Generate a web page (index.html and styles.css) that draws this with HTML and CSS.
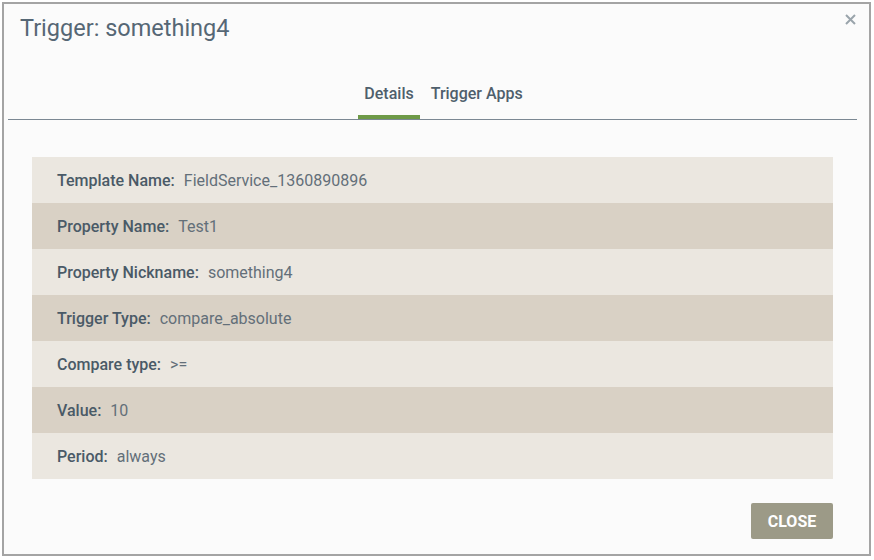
FILE: index.html
```html
<!DOCTYPE html>
<html>
<head>
<meta charset="utf-8">
<link rel="stylesheet" href="styles.css">
</head>
<body>
<div class="modal">
  <div class="header">
    <h1 class="title">Trigger: something4</h1>
    <button class="close-x" aria-label="Close">
      <svg width="11" height="11" viewBox="0 0 11 11"><path d="M1 1L10 10M10 1L1 10" stroke="#9aa4ab" stroke-width="2" stroke-linecap="butt"/></svg>
    </button>
  </div>
  <div class="tabs">
    <div class="tab active">Details</div>
    <div class="tab">Trigger Apps</div>
  </div>
  <div class="table">
    <div class="row"><span class="label">Template Name:</span><span class="value">FieldService_1360890896</span></div>
    <div class="row"><span class="label">Property Name:</span><span class="value">Test1</span></div>
    <div class="row"><span class="label">Property Nickname:</span><span class="value">something4</span></div>
    <div class="row"><span class="label">Trigger Type:</span><span class="value">compare_absolute</span></div>
    <div class="row"><span class="label">Compare type:</span><span class="value">&gt;=</span></div>
    <div class="row"><span class="label">Value:</span><span class="value">10</span></div>
    <div class="row"><span class="label">Period:</span><span class="value">always</span></div>
  </div>
  <div class="footer">
    <button class="btn-close">CLOSE</button>
  </div>
</div>
</body>
</html>
```
FILE: styles.css
```css
html, body {
  margin: 0;
  padding: 0;
  background: #ffffff;
}

.modal {
  box-sizing: border-box;
  margin: 2px 0 0 2px;
  width: 869px;
  height: 554px;
  border: 2px solid #a4a4a4;
  background: #fbfbfb;
  display: flex;
  flex-direction: column;
  font-family: Roboto, "Liberation Sans", sans-serif;
}

.header {
  display: flex;
  justify-content: space-between;
  align-items: flex-start;
  padding: 11px 13px 0 16px;
}

.title {
  margin: 0;
  font-size: 23.5px;
  line-height: 26px;
  font-weight: 400;
  color: #566775;
}

.close-x {
  margin-top: -1px;
  padding: 0;
  border: none;
  background: none;
  width: 11px;
  height: 11px;
  display: flex;
}

.tabs {
  display: flex;
  justify-content: center;
  gap: 5px;
  margin: 43px 12px 0 4px;
  padding-left: 22px;
  border-bottom: 1px solid #7b8893;
}

.tab {
  padding: 0 6px 11px;
  font-size: 16px;
  line-height: 20px;
  font-weight: 500;
  color: #4f5f6c;
  border-bottom: 4px solid transparent;
}

.tab.active {
  border-bottom-color: #6e9a47;
}

.table {
  margin: 37px 36px 0 28px;
  display: flex;
  flex-direction: column;
}

.row {
  height: 46px;
  display: flex;
  align-items: center;
  gap: 9px;
  padding-left: 25px;
  background: #ebe7e0;
  font-size: 16px;
}

.row:nth-child(even) {
  background: #d9d1c5;
}

.label {
  font-weight: 500;
  color: #4a5a67;
}

.value {
  color: #636f79;
}

.footer {
  display: flex;
  justify-content: flex-end;
  padding: 24px 36px 0 0;
}

.btn-close {
  width: 82px;
  height: 36px;
  border: none;
  border-radius: 2px;
  background: #9c9a87;
  color: #ffffff;
  font-family: Roboto, "Liberation Sans", sans-serif;
  font-size: 16px;
  font-weight: 700;
  padding: 0;
}
```
